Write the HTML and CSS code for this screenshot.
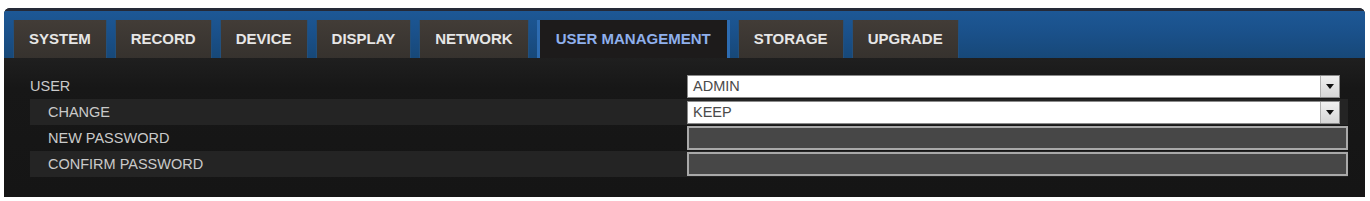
FILE: index.html
```html
<!DOCTYPE html>
<html lang="en">
<head>
  <meta charset="UTF-8">
  <title>User Management</title>
  <link rel="stylesheet" href="styles.css">
</head>
<body>

  <div class="panel">
    <!-- menu tabs -->
    <div class="tabbar">
      <div class="tab">SYSTEM</div>
      <div class="tab">RECORD</div>
      <div class="tab">DEVICE</div>
      <div class="tab">DISPLAY</div>
      <div class="tab">NETWORK</div>
      <div class="tab active">USER MANAGEMENT</div>
      <div class="tab">STORAGE</div>
      <div class="tab">UPGRADE</div>
    </div>

    <div class="content">
      <div class="row">
        <div class="label">USER</div>
        <div class="select"><span class="value">ADMIN</span><span class="arrow"></span></div>
      </div>
      <div class="row sub odd">
        <div class="label">CHANGE</div>
        <div class="select"><span class="value">KEEP</span><span class="arrow"></span></div>
      </div>
      <div class="row sub">
        <div class="label">NEW PASSWORD</div>
        <div class="password"></div>
      </div>
      <div class="row sub odd">
        <div class="label">CONFIRM PASSWORD</div>
        <div class="password"></div>
      </div>
    </div>
  </div>

</body>
</html>
```

FILE: styles.css
```css
body { margin: 0; background: #fff; font-family: "Liberation Sans", Arial, sans-serif; }

.panel { margin: 8px 5px 0 4px; height: 189px; background: #151515; border-radius: 6px 6px 0 0; overflow: hidden; }

.tabbar { display: flex; gap: 8px; height: 38px; padding: 9px 9px 0; border-top: 3px solid #252a38; background: linear-gradient(#1d5896, #1a5089 50%, #174878); }
.tab { padding: 0 15px; line-height: 38px; font-size: 15px; font-weight: bold; color: #e6e6e6; background: linear-gradient(#423c37, #36322e); border-left: 1px solid #23507c; border-right: 1px solid #23507c; }
.tab.active { padding: 0 16px; color: #8fb0ec; background: #1d1b1b; border-left: 3px solid #2d6cb2; border-right: 3px solid #2d6cb2; }

.content { display: flex; flex-direction: column; padding: 15px 17px 0 26px; height: 174px; background: linear-gradient(#1f1f1f, #171717 30px, #141414); }
.row { display: grid; grid-template-columns: 657px 1fr; align-items: center; height: 26px; }
.row.sub .label { padding-left: 18px; }
.row.odd { background: #242424; }
.label { font-size: 14.5px; color: #cacaca; }

.select { display: flex; height: 21px; margin-right: 8px; background: #fff; border: 1px solid #8a8a8a; }
.select .value { flex: 1; padding-left: 5px; line-height: 21px; font-size: 14.5px; color: #4a4a4a; }
.select .arrow { position: relative; width: 18px; background: linear-gradient(#f0f0f0, #d6d6d6); border-left: 1px solid #b0b0b0; }
.select .arrow::after { content: ""; position: absolute; left: 5px; top: 8px; border-left: 4px solid transparent; border-right: 4px solid transparent; border-top: 5px solid #111; }

.password { height: 20px; background: #474747; border: 2px solid #a9a9a9; }
```
